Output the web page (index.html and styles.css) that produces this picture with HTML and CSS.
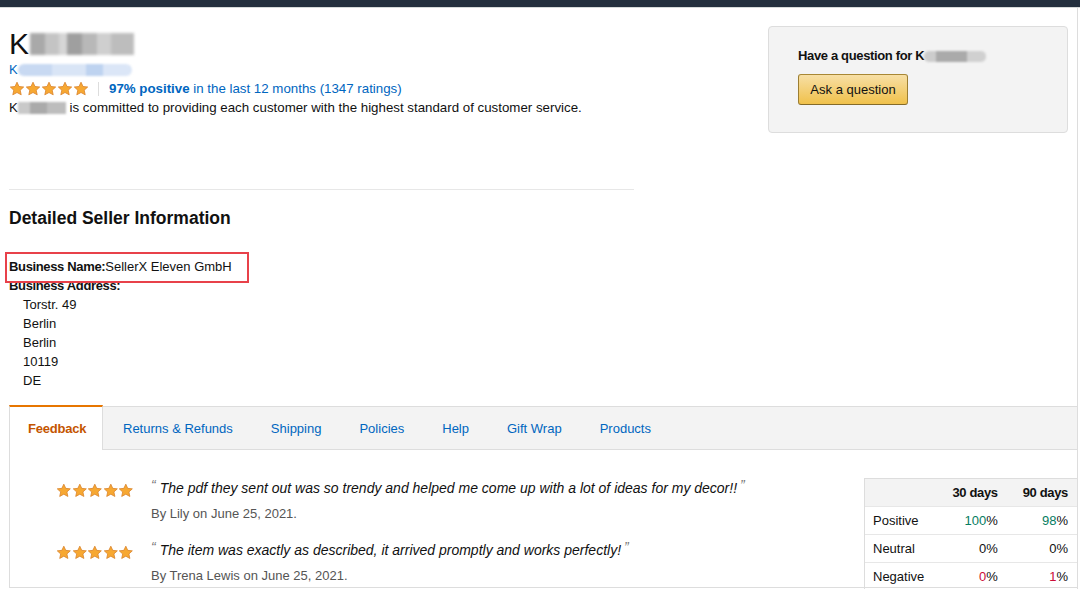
FILE: index.html
```html
<!DOCTYPE html>
<html>
<head>
<meta charset="utf-8">
<link rel="stylesheet" href="styles.css">
</head>
<body>
<div class="topbar"></div>
<div class="page">
  <div class="top">
    <div class="seller">
      <div class="title">K<span class="mosaic big"></span></div>
      <div class="storelink">K<span class="mosaic blue"></span></div>
      <div class="rating">
        <span class="stars">
          <svg viewBox="0 0 16 16"><path d="M8 1.2l2 4.3 4.7.5-3.5 3.2 1 4.6L8 11.5 3.8 13.8l1-4.6L1.3 6l4.7-.5z"/></svg><svg viewBox="0 0 16 16"><path d="M8 1.2l2 4.3 4.7.5-3.5 3.2 1 4.6L8 11.5 3.8 13.8l1-4.6L1.3 6l4.7-.5z"/></svg><svg viewBox="0 0 16 16"><path d="M8 1.2l2 4.3 4.7.5-3.5 3.2 1 4.6L8 11.5 3.8 13.8l1-4.6L1.3 6l4.7-.5z"/></svg><svg viewBox="0 0 16 16"><path d="M8 1.2l2 4.3 4.7.5-3.5 3.2 1 4.6L8 11.5 3.8 13.8l1-4.6L1.3 6l4.7-.5z"/></svg><svg viewBox="0 0 16 16"><path d="M8 1.2l2 4.3 4.7.5-3.5 3.2 1 4.6L8 11.5 3.8 13.8l1-4.6L1.3 6l4.7-.5z"/></svg>
        </span>
        <span class="sep"></span>
        <span class="link"><b>97% positive</b> in the last 12 months (1347 ratings)</span>
      </div>
      <div class="desc">K<span class="mosaic small"></span> is committed to providing each customer with the highest standard of customer service.</div>
    </div>
    <div class="askbox">
      <div class="askq">Have a question for K<span class="mosaic ask"></span></div>
      <button class="askbtn">Ask a question</button>
    </div>
  </div>
  <div class="divider"></div>
  <h2 class="heading">Detailed Seller Information</h2>
  <div class="info">
    <div class="bizname"><b>Business Name:</b>SellerX Eleven GmbH</div>
    <div><b>Business Address:</b></div>
    <div class="addr">
      <div>Torstr. 49</div>
      <div>Berlin</div>
      <div>Berlin</div>
      <div>10119</div>
      <div>DE</div>
    </div>
  </div>
  <div class="tabs">
    <div class="tab active">Feedback</div>
    <div class="tab">Returns &amp; Refunds</div>
    <div class="tab">Shipping</div>
    <div class="tab">Policies</div>
    <div class="tab">Help</div>
    <div class="tab">Gift Wrap</div>
    <div class="tab">Products</div>
  </div>
  <div class="content">
    <div class="reviews">
      <div class="review">
        <span class="stars rs">
          <svg viewBox="0 0 16 16"><path d="M8 1.2l2 4.3 4.7.5-3.5 3.2 1 4.6L8 11.5 3.8 13.8l1-4.6L1.3 6l4.7-.5z"/></svg><svg viewBox="0 0 16 16"><path d="M8 1.2l2 4.3 4.7.5-3.5 3.2 1 4.6L8 11.5 3.8 13.8l1-4.6L1.3 6l4.7-.5z"/></svg><svg viewBox="0 0 16 16"><path d="M8 1.2l2 4.3 4.7.5-3.5 3.2 1 4.6L8 11.5 3.8 13.8l1-4.6L1.3 6l4.7-.5z"/></svg><svg viewBox="0 0 16 16"><path d="M8 1.2l2 4.3 4.7.5-3.5 3.2 1 4.6L8 11.5 3.8 13.8l1-4.6L1.3 6l4.7-.5z"/></svg><svg viewBox="0 0 16 16"><path d="M8 1.2l2 4.3 4.7.5-3.5 3.2 1 4.6L8 11.5 3.8 13.8l1-4.6L1.3 6l4.7-.5z"/></svg>
        </span>
        <div class="rtext">
          <div class="quote"><span class="qm">&#8220;</span>The pdf they sent out was so trendy and helped me come up with a lot of ideas for my decor!!<span class="qm end">&#8221;</span></div>
          <div class="by">By Lily on June 25, 2021.</div>
        </div>
      </div>
      <div class="review">
        <span class="stars rs">
          <svg viewBox="0 0 16 16"><path d="M8 1.2l2 4.3 4.7.5-3.5 3.2 1 4.6L8 11.5 3.8 13.8l1-4.6L1.3 6l4.7-.5z"/></svg><svg viewBox="0 0 16 16"><path d="M8 1.2l2 4.3 4.7.5-3.5 3.2 1 4.6L8 11.5 3.8 13.8l1-4.6L1.3 6l4.7-.5z"/></svg><svg viewBox="0 0 16 16"><path d="M8 1.2l2 4.3 4.7.5-3.5 3.2 1 4.6L8 11.5 3.8 13.8l1-4.6L1.3 6l4.7-.5z"/></svg><svg viewBox="0 0 16 16"><path d="M8 1.2l2 4.3 4.7.5-3.5 3.2 1 4.6L8 11.5 3.8 13.8l1-4.6L1.3 6l4.7-.5z"/></svg><svg viewBox="0 0 16 16"><path d="M8 1.2l2 4.3 4.7.5-3.5 3.2 1 4.6L8 11.5 3.8 13.8l1-4.6L1.3 6l4.7-.5z"/></svg>
        </span>
        <div class="rtext">
          <div class="quote"><span class="qm">&#8220;</span>The item was exactly as described, it arrived promptly and works perfectly!<span class="qm end">&#8221;</span></div>
          <div class="by">By Trena Lewis on June 25, 2021.</div>
        </div>
      </div>
    </div>
    <table class="stats">
      <thead>
        <tr><th></th><th>30 days</th><th>90 days</th></tr>
      </thead>
      <tbody>
        <tr><td>Positive</td><td><span class="green">100</span>%</td><td><span class="green">98</span>%</td></tr>
        <tr><td>Neutral</td><td>0%</td><td>0%</td></tr>
        <tr><td>Negative</td><td><span class="red">0</span>%</td><td><span class="red">1</span>%</td></tr>
      </tbody>
    </table>
  </div>
</div>
</body>
</html>
```

FILE: styles.css
```css
* { box-sizing: border-box; }
html, body { margin: 0; padding: 0; background: #fff; }
body {
  font-family: "Liberation Sans", Arial, sans-serif;
  font-size: 13px;
  color: #111;
  width: 1080px;
  height: 589px;
  overflow: hidden;
}
b, th, .askq, .heading { letter-spacing: -0.35px; }
.topbar {
  height: 8px;
  background: #232f3e;
  border-bottom: 1px solid #d5d9d9;
}
.page {
  width: 1078px;
  height: 581px;
  padding-left: 9px;
  border-right: 1px solid #ddd;
}
.top {
  display: flex;
  justify-content: space-between;
  padding-top: 18px;
}
.title {
  font-size: 30px;
  line-height: 36px;
  height: 36px;
  display: flex;
  align-items: center;
}
.mosaic { display: inline-block; vertical-align: middle; }
.mosaic.big {
  width: 104px; height: 22px;
  margin-left: 1px;
  background:
    linear-gradient(90deg, #a9a9a9 0 14%, #c4c4c4 14% 28%, #d6d6d6 28% 36%, #9f9f9f 36% 50%, #b8b8b8 50% 64%, #cfcfcf 64% 78%, #bdbdbd 78% 100%);
  filter: blur(1.5px);
}
.storelink {
  color: #0066c0;
  font-size: 13px;
  line-height: 18px;
  margin-top: -1px;
  display: flex;
  align-items: center;
}
.mosaic.blue {
  width: 114px; height: 12px;
  background: linear-gradient(90deg, #c8d9f2 0 30%, #d9e5f6 30% 60%, #bed3f0 60% 75%, #dbe6f7 75% 100%);
  border-radius: 6px;
  filter: blur(1px);
}
.rating {
  display: flex;
  align-items: center;
  height: 19px;
  font-size: 13.3px;
}
.stars { display: inline-flex; }
.stars svg {
  width: 16px; height: 16px;
  fill: #f7a832;
  stroke: #d9822b;
  stroke-width: 0.8;
  stroke-linejoin: round;
}
.sep {
  width: 1px; height: 14px;
  background: #ddd;
  margin: 0 10px 0 9px;
}
.link { color: #0066c0; }
.link b { font-weight: bold; letter-spacing: 0; }
.desc {
  line-height: 19px;
  font-size: 13.3px;
  display: flex;
  align-items: center;
  white-space: pre;
}
.mosaic.small {
  width: 48px; height: 12px;
  background: linear-gradient(90deg, #c9c9c9 0 25%, #aaa 25% 60%, #bdbdbd 60% 100%);
  filter: blur(1px);
}
.askbox {
  width: 300px;
  height: 107px;
  margin-right: 9px;
  background: #f3f3f3;
  border: 1px solid #ddd;
  border-radius: 4px;
  padding: 19px 0 0 29px;
}
.askq {
  font-weight: bold;
  font-size: 13px;
  line-height: 20px;
  display: flex;
  align-items: center;
}
.mosaic.ask {
  width: 62px; height: 11px;
  background: linear-gradient(90deg, #ccc 0 20%, #aaa 20% 70%, #d0d0d0 70% 100%);
  border-radius: 5px;
  filter: blur(0.8px);
}
.askbtn {
  margin-top: 8px;
  width: 110px;
  height: 31px;
  font-family: "Liberation Sans", Arial, sans-serif;
  font-size: 13px;
  color: #111;
  background: linear-gradient(#f7dfa5, #f0c14b);
  border: 1px solid #a88734;
  border-color: #a88734 #9c7e31 #846a29;
  border-radius: 3px;
  padding: 0;
}
.divider {
  width: 625px;
  height: 1px;
  background: #e7e7e7;
  margin-top: 56px;
}
.heading {
  font-size: 17.5px;
  font-weight: bold;
  margin: 17px 0 0;
  line-height: 22px;
  letter-spacing: 0;
}
.info {
  margin-top: 28px;
  line-height: 19px;
}
.bizname { position: relative; }
.bizname::after {
  content: "";
  position: absolute;
  left: -4px; top: -5px;
  width: 240px; height: 27px;
  border: 2px solid #e8414a;
}
.addr { padding-left: 14px; }
.tabs {
  margin-top: 16px;
  height: 44px;
  display: flex;
  background: #f3f3f3;
  border-top: 1px solid #ddd;
  border-bottom: 1px solid #ddd;
}
.tab {
  padding: 0 19px;
  display: flex;
  align-items: center;
  color: #0066c0;
  font-size: 13px;
}
.tab.active {
  background: #fff;
  color: #c45500;
  font-weight: bold;
  border-top: 2px solid #e77600;
  border-left: 1px solid #ddd;
  border-right: 1px solid #ddd;
  margin-top: -2px;
  margin-bottom: -1px;
  padding: 0 17px 0 18px;
  width: 94px;
}
.tab.active, .tab.active * { letter-spacing: -0.2px; }
.tab:nth-child(2) { padding-left: 20px; }
.content {
  display: flex;
  justify-content: space-between;
  border-left: 1px solid #ddd;
  border-bottom: 1px solid #ddd;
  height: 138px;
  padding-top: 28px;
}
.reviews { padding-left: 46px; }
.review {
  display: flex;
  align-items: flex-start;
  height: 62px;
}
.stars.rs { margin-top: 5px; }
.stars.rs svg { width: 15.6px; height: 15.6px; }
.rtext { margin-left: 17px; }
.quote {
  font-style: italic;
  font-size: 14px;
  line-height: 20px;
}
.qm {
  color: #777;
  font-size: 14px;
  font-style: italic;
  vertical-align: top;
  line-height: 14px;
  margin-right: 4px;
}
.qm.end { margin: 0 0 0 3px; }
.by {
  color: #555;
  font-size: 13px;
  margin-top: 7px;
  line-height: 18px;
}
.stats {
  border-collapse: collapse;
  width: 213px;
  font-size: 13px;
  align-self: flex-start;
}
.stats th, .stats td {
  height: 28px;
  padding: 0 9px 0 8px;
  border-top: 1px solid #e7e7e7;
  text-align: right;
}
.stats th {
  background: #f3f3f3;
  font-weight: bold;
  border-top: 1px solid #ddd;
}
.stats th:first-child, .stats td:first-child {
  text-align: left;
  border-left: 1px solid #ddd;
  width: 72px;
}
.green { color: #067d62; }
.red { color: #cc0c39; }
```
